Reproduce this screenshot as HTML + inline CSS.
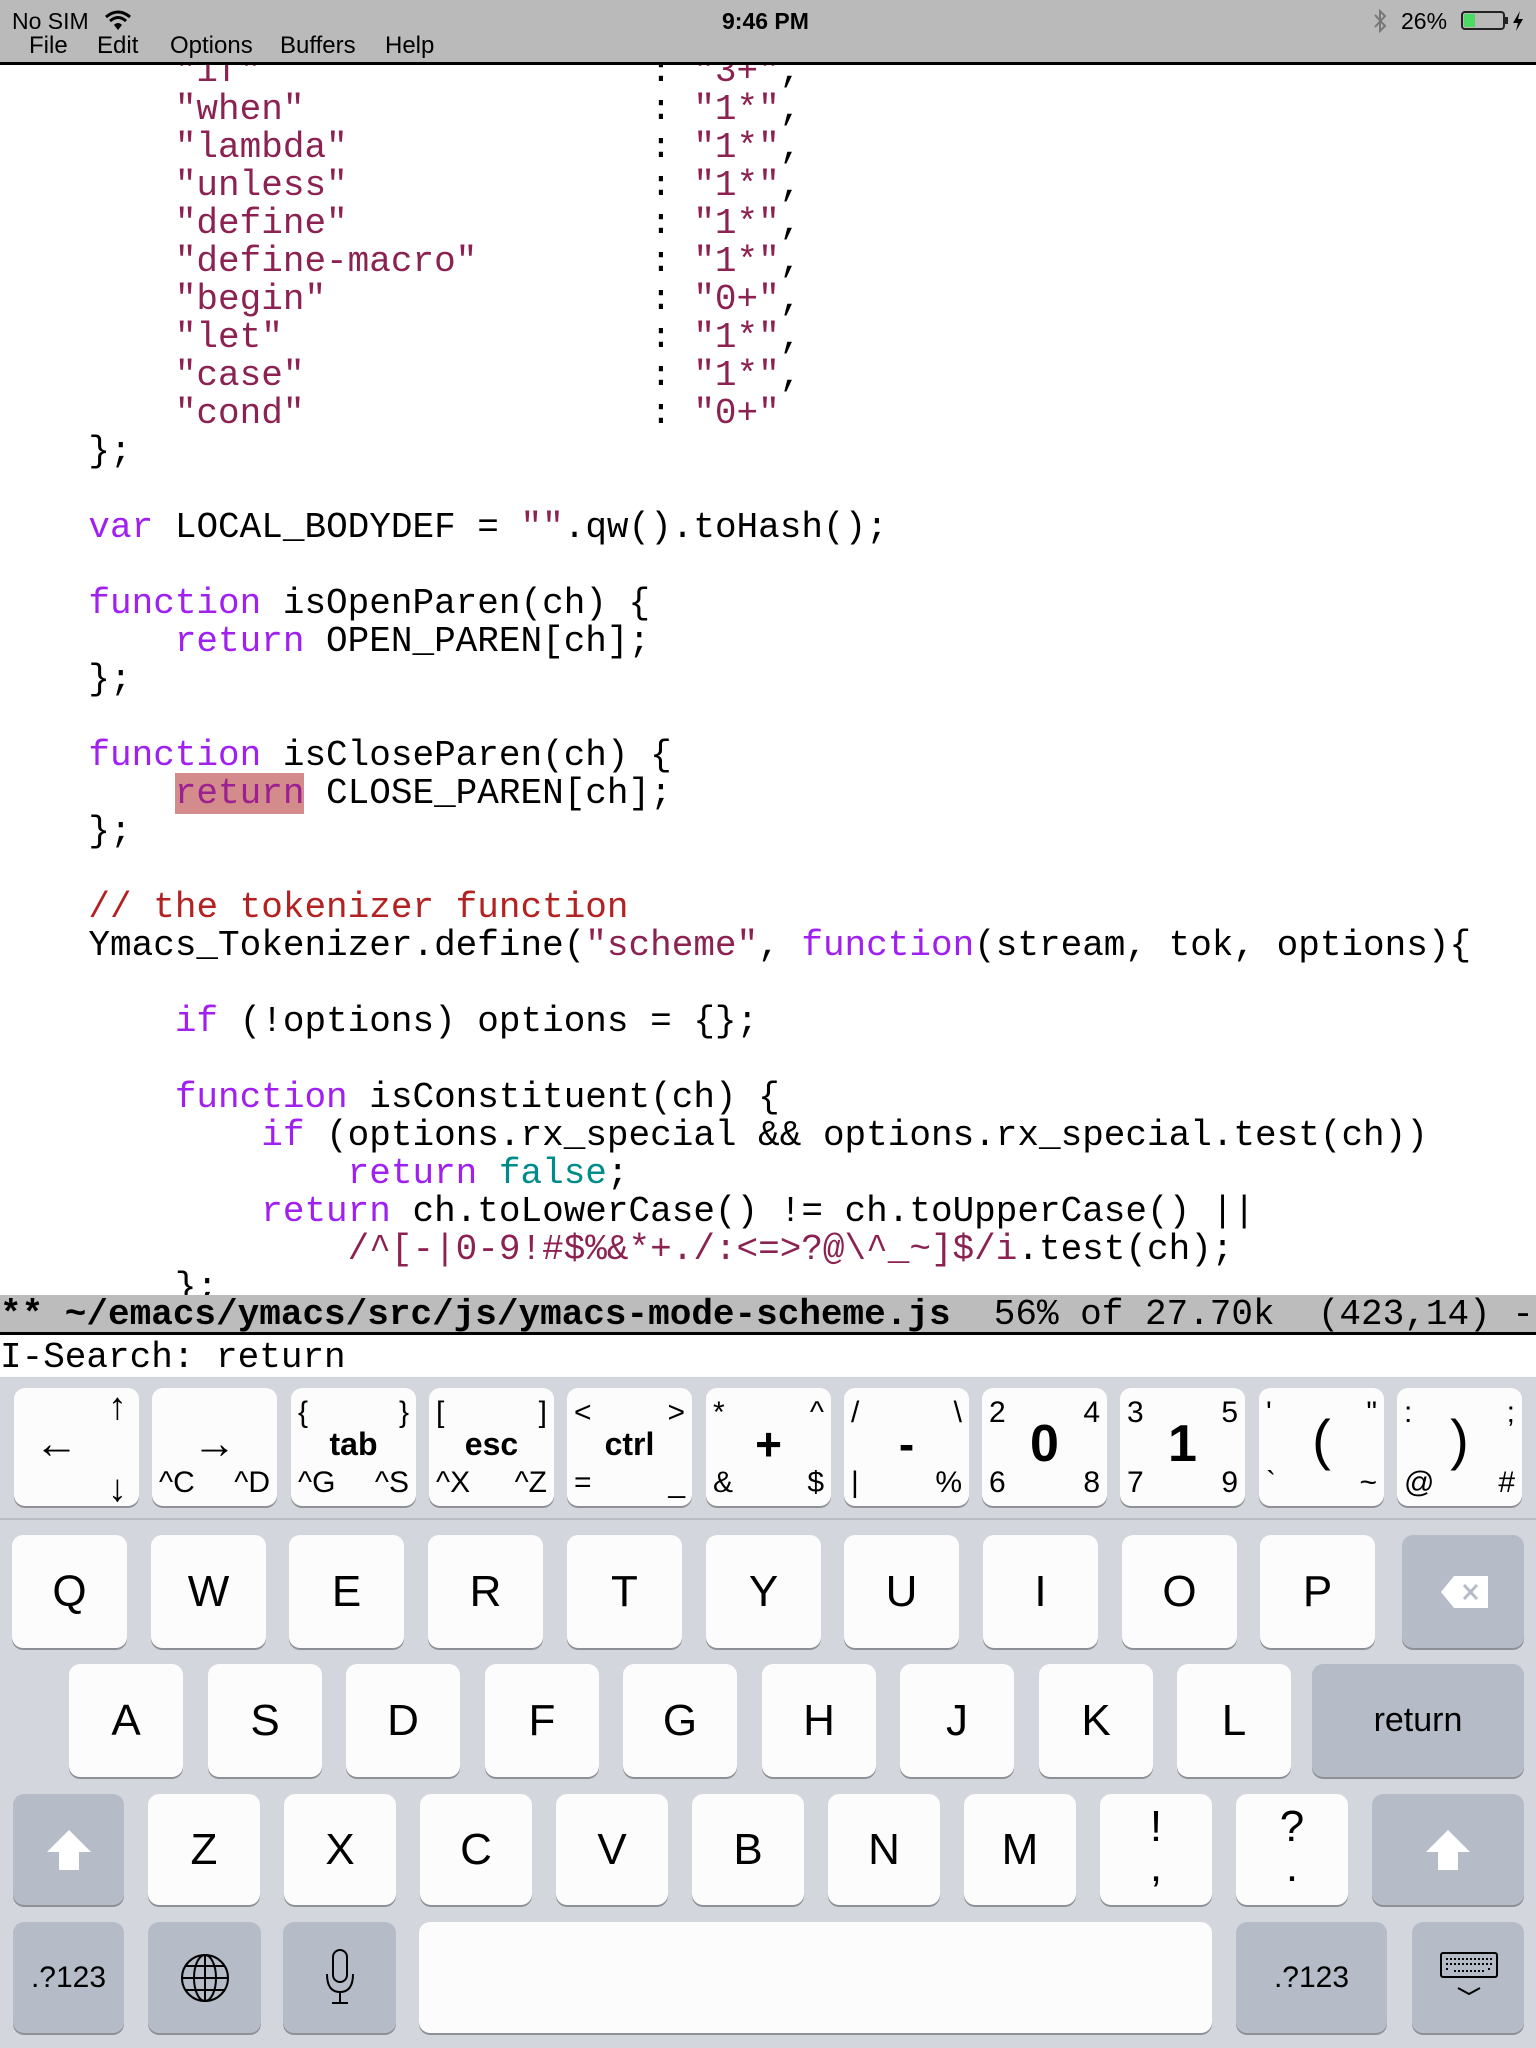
<!DOCTYPE html>
<html><head><meta charset="utf-8"><style>
*{margin:0;padding:0;box-sizing:border-box}
body{width:1536px;height:2048px;position:relative;overflow:hidden;background:#fff;font-family:"Liberation Sans",sans-serif}
.abs{position:absolute}
#status{left:0;top:0;width:1536px;height:62px;background:#bababa}
#status .line{left:0;top:62px;width:1536px;height:3px;background:#000}
.st{font-size:23px;color:#000;position:absolute;top:8px}
.menu{font-size:24px;position:absolute;top:32px}
#code{left:0;top:65px;width:1536px;height:1230px;overflow:hidden}
pre{position:absolute;left:2px;top:-12px;font-family:"Liberation Mono",monospace;font-size:36px;line-height:38px;color:#000}
.s{color:#8b2252}.k{color:#a020f0}.c{color:#b22222}.f{color:#008b8b}
.hl{background:#d38b8b;color:#9b2090}
#mode{left:0;top:1295px;width:1536px;height:40px;background:#bcbcbc;border-bottom:3px solid #000;font-family:"Liberation Mono",monospace;font-size:36px;line-height:40px;white-space:pre;overflow:hidden}
#mini{left:0;top:1338px;width:1536px;height:39px;font-family:"Liberation Mono",monospace;font-size:36px;line-height:40px;white-space:pre}
#kb{left:0;top:1377px;width:1536px;height:671px;background:#d3d6dc}
.key{position:absolute;background:#fcfcfd;border-radius:11px;box-shadow:0 2px 0 #8e9095;color:#000;text-align:center}
.g{background:#b5bcc8}
.x{position:absolute;font-size:30px;line-height:30px}
.cen{position:absolute;left:0;right:0;text-align:center}
</style></head><body>
<div id="status" class="abs">
<div class="st" style="left:12px">No SIM</div>
<svg class="abs" style="left:104px;top:9px" width="28" height="22" viewBox="0 0 28 22"><path d="M2 8 Q14 -2 26 8" stroke="#000" stroke-width="3" fill="none"/><path d="M6 12 Q14 5 22 12" stroke="#000" stroke-width="3" fill="none"/><path d="M10 16 L14 21 L18 16 Q14 12 10 16Z" fill="#000"/></svg>
<div class="st" style="left:722px;font-weight:bold;font-size:23px">9:46 PM</div>
<svg class="abs" style="left:1373px;top:8px" width="14" height="26" viewBox="0 0 14 26"><path d="M2 7 L12 18 L7 23 L7 3 L12 8 L2 19" stroke="#777" stroke-width="2" fill="none"/></svg>
<div class="st" style="left:1401px">26%</div>
<div class="abs" style="left:1461px;top:11px;width:44px;height:19px;border:2px solid #222;border-radius:4px"><div style="position:absolute;left:1px;top:1px;width:11px;height:13px;background:#4cd964"></div></div>
<div class="abs" style="left:1505px;top:17px;width:3px;height:7px;background:#222"></div>
<svg class="abs" style="left:1512px;top:11px" width="12" height="20" viewBox="0 0 12 20"><path d="M8 0 L1 12 L6 12 L4 20 L11 8 L6 8Z" fill="#000"/></svg>
<div class="menu" style="left:29px">File</div>
<div class="menu" style="left:97px">Edit</div>
<div class="menu" style="left:170px">Options</div>
<div class="menu" style="left:280px">Buffers</div>
<div class="menu" style="left:385px">Help</div>
<div class="line abs"></div>
</div>
<div id="code" class="abs"><pre>        <span class="s">"if"</span>                  : <span class="s">"3+"</span>,
        <span class="s">"when"</span>                : <span class="s">"1*"</span>,
        <span class="s">"lambda"</span>              : <span class="s">"1*"</span>,
        <span class="s">"unless"</span>              : <span class="s">"1*"</span>,
        <span class="s">"define"</span>              : <span class="s">"1*"</span>,
        <span class="s">"define-macro"</span>        : <span class="s">"1*"</span>,
        <span class="s">"begin"</span>               : <span class="s">"0+"</span>,
        <span class="s">"let"</span>                 : <span class="s">"1*"</span>,
        <span class="s">"case"</span>                : <span class="s">"1*"</span>,
        <span class="s">"cond"</span>                : <span class="s">"0+"</span>
    };

    <span class="k">var</span> LOCAL_BODYDEF = <span class="s">""</span>.qw().toHash();

    <span class="k">function</span> isOpenParen(ch) {
        <span class="k">return</span> OPEN_PAREN[ch];
    };

    <span class="k">function</span> isCloseParen(ch) {
        <span class="hl">return</span> CLOSE_PAREN[ch];
    };

    <span class="c">// the tokenizer function</span>
    Ymacs_Tokenizer.define(<span class="s">"scheme"</span>, <span class="k">function</span>(stream, tok, options){

        <span class="k">if</span> (!options) options = {};

        <span class="k">function</span> isConstituent(ch) {
            <span class="k">if</span> (options.rx_special &amp;&amp; options.rx_special.test(ch))
                <span class="k">return</span> <span class="f">false</span>;
            <span class="k">return</span> ch.toLowerCase() != ch.toUpperCase() ||
                <span class="s">/^[-|0-9!#$%&amp;*+./:&lt;=&gt;?@\^_~]$/i</span>.test(ch);
        };</pre></div>
<div id="mode" class="abs"><b>** ~/emacs/ymacs/src/js/ymacs-mode-scheme.js</b>  56% of 27.70k  (423,14) -</div>
<div id="mini" class="abs">I-Search: return</div>
<div id="kb" class="abs">
<div class="abs" style="left:0;top:141px;width:1536px;height:2px;background:#b9bcc2"></div>
</div>
<div id="keys"></div>
<script>
var H='';
function key(x,y,w,h,inner,cls){H+='<div class="key '+(cls||'')+'" style="left:'+x+'px;top:'+y+'px;width:'+w+'px;height:'+h+'px">'+inner+'</div>';}
var ex=[
 ['','↑','<span style="font-size:44px">←</span>','','↓'],
 ['','','<span style="font-size:44px">→</span>','^C','^D'],
 ['{','}','<b style="font-size:32px">tab</b>','^G','^S'],
 ['[',']','<b style="font-size:32px">esc</b>','^X','^Z'],
 ['&lt;','&gt;','<b style="font-size:32px">ctrl</b>','=','_'],
 ['*','^','<b style="font-size:46px">+</b>','&amp;','$'],
 ['/','\\','<b style="font-size:46px">-</b>','|','%'],
 ['2','4','<b style="font-size:52px">0</b>','6','8'],
 ['3','5','<b style="font-size:52px">1</b>','7','9'],
 ["'",'"','<span style="font-size:56px">(</span>','`','~'],
 [':',';','<span style="font-size:56px">)</span>','@','#']];
for(var i=0;i<11;i++){var e=ex[i];var x=14+i*138.3;
 var inn='<div class="x" style="left:7px;top:10px">'+e[0]+'</div><div class="x" style="right:7px;top:10px">'+e[1]+'</div><div class="cen" style="top:'+(i==0?30:(i>=9?24:28))+'px;line-height:56px">'+e[2]+'</div><div class="x" style="left:7px;bottom:8px">'+e[3]+'</div><div class="x" style="right:7px;bottom:8px">'+e[4]+'</div>';
 if(i==0) inn='<div class="cen" style="top:28px;left:-40px;line-height:56px;font-size:44px">←</div><div class="x" style="right:12px;top:4px;font-size:38px">↑</div><div class="x" style="right:12px;bottom:2px;font-size:38px">↓</div>';
 key(Math.round(x),1388,125,118,inn);}
function lk(x,y,w,t,cls,fs){key(Math.round(x),y,w,113,'<div class="cen" style="top:0;line-height:113px;font-size:'+(fs||44)+'px">'+t+'</div>',cls);}
var r1='QWERTYUIOP';for(i=0;i<10;i++)lk(12+i*138.7,1535,115,r1[i]);
key(1402,1535,122,113,'<div class="abs" style="left:38px;top:40px;width:48px;height:32px"><svg width="50" height="34" viewBox="0 0 50 34"><path d="M14 1 L48 1 L48 33 L14 33 L1 17Z" fill="#fff"/><path d="M24 10 L37 24 M37 10 L24 24" stroke="#b5bcc8" stroke-width="3"/></svg></div>','g');
var r2='ASDFGHJKL';for(i=0;i<9;i++)lk(69+i*138.5,1664,114,r2[i]);
key(1312,1664,212,113,'<div class="cen" style="top:0;line-height:113px;font-size:34px">return</div>','g');
var shift='<div class="abs" style="left:50%;top:50%;margin:-20px 0 0 -22px"><svg width="44" height="40" viewBox="0 0 44 40"><path d="M22 0 L44 22 L32 22 L32 40 L12 40 L12 22 L0 22Z" fill="#fff"/></svg></div>';
key(13,1794,111,111,shift,'g');
var r3=['Z','X','C','V','B','N','M'];for(i=0;i<7;i++){key(Math.round(148+i*136),1794,112,111,'<div class="cen" style="top:0;line-height:111px;font-size:44px">'+r3[i]+'</div>');}
key(1100,1794,112,111,'<div class="cen" style="top:8px;font-size:44px;line-height:50px">!</div><div class="cen" style="top:48px;font-size:44px;line-height:50px">,</div>');
key(1236,1794,112,111,'<div class="cen" style="top:8px;font-size:44px;line-height:50px">?</div><div class="cen" style="top:48px;font-size:44px;line-height:50px">.</div>');
key(1372,1794,152,111,shift,'g');
key(13,1922,111,111,'<div class="cen" style="top:0;line-height:111px;font-size:30px">.?123</div>','g');
key(148,1922,113,111,'<svg style="position:absolute;left:32px;top:31px" width="50" height="50" viewBox="0 0 50 50" fill="none" stroke="#000" stroke-width="2"><circle cx="25" cy="25" r="23"/><ellipse cx="25" cy="25" rx="11" ry="23"/><path d="M25 2V48M2 25H48M6 13H44M6 37H44"/></svg>','g');
key(283,1922,113,111,'<svg style="position:absolute;left:40px;top:26px" width="34" height="60" viewBox="0 0 34 60" fill="none" stroke="#000" stroke-width="2"><rect x="10" y="2" width="14" height="32" rx="7"/><path d="M4 26 Q4 44 17 44 Q30 44 30 26M17 44V55M9 55H25"/></svg>','g');
key(419,1922,793,111,'');
key(1236,1922,151,111,'<div class="cen" style="top:0;line-height:111px;font-size:30px">.?123</div>','g');
key(1412,1922,112,111,'<svg style="position:absolute;left:28px;top:30px" width="58" height="48" viewBox="0 0 58 48" fill="none" stroke="#000" stroke-width="2"><rect x="1" y="1" width="56" height="24" rx="2"/><path d="M6 7H52M6 12H52M6 17H10M48 17H52M14 19H44" stroke-dasharray="2 2"/><path d="M18 36L29 42L40 36"/></svg>','g');
document.getElementById('keys').innerHTML=H;
</script>
</body></html>
